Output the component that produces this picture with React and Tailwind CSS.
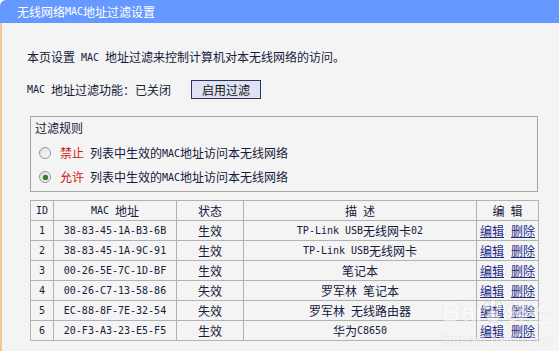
import React from "react";

const M = ({ children }) => (
  <span className="font-['DejaVu_Sans_Mono',monospace] text-[10px]">{children}</span>
);
const Sp = () => <span className="inline-block w-[6px]" />;

const Radio = ({ checked }) => (
  <span className="relative inline-flex h-[12px] w-[12px] items-center justify-center rounded-full border border-[#8a96a6] bg-gradient-to-br from-[#dcdcdc] to-white">
    {checked && <span className="h-[5px] w-[5px] rounded-full bg-[#2f7d32] shadow-[0_0_1px_#1c4d1e]" />}
  </span>
);

const rows = [
  ["1", "38-83-45-1A-B3-6B", "生效", <><M>TP-Link USB</M>无线网卡<M>02</M></>],
  ["2", "38-83-45-1A-9C-91", "生效", <><M>TP-Link USB</M>无线网卡</>],
  ["3", "00-26-5E-7C-1D-BF", "生效", "笔记本"],
  ["4", "00-26-C7-13-58-86", "失效", <>罗军林<Sp />笔记本</>],
  ["5", "EC-88-8F-7E-32-54", "失效", <>罗军林<Sp />无线路由器</>],
  ["6", "20-F3-A3-23-E5-F5", "生效", <>华为<M>C8650</M></>],
];

const Cell = ({ children, className = "" }) => (
  <div className={"flex h-[19px] items-center justify-center overflow-hidden whitespace-nowrap " + className}>
    {children}
  </div>
);

export default function App() {
  return (
    <div className="relative flex h-[351px] w-[559px] flex-col overflow-hidden bg-[#f4f4f4] font-['Noto_Sans_CJK_SC',sans-serif] text-[12px] text-[#15203a]">
      <div className="bg-white">
        <div className="flex h-[23px] items-center rounded-tl-[6px] bg-[#6699ff] pl-[17px] text-white">
          无线网络<M>MAC</M>地址过滤设置
        </div>
      </div>
      <div className="flex-1 border-l-2 border-[#f2c795] bg-[#f4f4f4] pl-[25px] pt-[24px]">
        <div className="flex h-[20px] items-center whitespace-pre">
          本页设置<Sp /><M>MAC</M><Sp />地址过滤来控制计算机对本无线网络的访问。
        </div>
        <div className="mt-[13px] flex h-[19px] items-center">
          <span className="flex items-center"><M>MAC</M><Sp />地址过滤功能：已关闭</span>
          <button className="ml-[20px] h-[19px] w-[70px] border border-[#2c3560] bg-[#dfe2f3] p-0 text-[12px] leading-[17px] text-[#111]">
            启用过滤
          </button>
        </div>
        <div className="ml-[3px] mt-[17px] h-[76px] w-[508px] border border-[#a6a6a6] pt-[1px]">
          <div className="flex h-[20px] items-center pl-[4px]">过滤规则</div>
          <div className="mt-[3px] flex h-[24px] items-center pl-[8px]">
            <Radio />
            <span className="ml-[9px] text-[#cc1616]">禁止</span>
            <span className="ml-[6px] flex items-center">列表中生效的<M>MAC</M>地址访问本无线网络</span>
          </div>
          <div className="flex h-[24px] items-center pl-[8px]">
            <Radio checked />
            <span className="ml-[9px] text-[#cc1616]">允许</span>
            <span className="ml-[6px] flex items-center">列表中生效的<M>MAC</M>地址访问本无线网络</span>
          </div>
        </div>
        <table className="ml-[3px] mt-[8px] w-[508px] table-fixed border-collapse text-center">
          <colgroup>
            <col className="w-[23px]" />
            <col className="w-[123px]" />
            <col className="w-[67px]" />
            <col className="w-[233px]" />
            <col className="w-[62px]" />
          </colgroup>
          <thead>
            <tr>
              <th className="border border-[#b2b2b2] p-0 font-normal"><Cell><M>ID</M></Cell></th>
              <th className="border border-[#b2b2b2] p-0 font-normal"><Cell><M>MAC</M><Sp />地址</Cell></th>
              <th className="border border-[#b2b2b2] p-0 font-normal"><Cell>状态</Cell></th>
              <th className="border border-[#b2b2b2] p-0 font-normal"><Cell>描<Sp />述</Cell></th>
              <th className="border border-[#b2b2b2] p-0 font-normal"><Cell>编<Sp />辑</Cell></th>
            </tr>
          </thead>
          <tbody>
            {rows.map((r) => (
              <tr key={r[0]}>
                <td className="border border-[#b2b2b2] p-0"><Cell><M>{r[0]}</M></Cell></td>
                <td className="border border-[#b2b2b2] p-0"><Cell><M>{r[1]}</M></Cell></td>
                <td className="border border-[#b2b2b2] p-0"><Cell>{r[2]}</Cell></td>
                <td className="border border-[#b2b2b2] p-0"><Cell>{r[3]}</Cell></td>
                <td className="border border-[#b2b2b2] p-0 text-[#1f2b86]">
                  <Cell>
                    <span className="underline">编辑</span>
                    <span className="ml-[7px] underline">删除</span>
                  </Cell>
                </td>
              </tr>
            ))}
          </tbody>
        </table>
      </div>
      <div className="pointer-events-none absolute left-[442px] top-[298px] flex flex-col items-start text-white opacity-50 [text-shadow:0_0_1px_#b8b8b8]">
        <div className="flex items-end font-['Liberation_Sans',sans-serif] text-[26px] font-bold leading-[28px]">
          Bai
          <svg width="22" height="24" viewBox="0 0 22 24" className="mb-[2px]">
            <g fill="#ffffff" stroke="#c4c4c4" strokeWidth="1">
              <ellipse cx="5" cy="6" rx="3" ry="4" />
              <ellipse cx="11" cy="3.5" rx="3" ry="3.5" />
              <ellipse cx="17" cy="6" rx="3" ry="4" />
              <path d="M11 10 C5 10 3 18 6 21 C8 23 14 23 16 21 C19 18 17 10 11 10 Z" />
            </g>
          </svg>
          <span className="ml-[2px] font-['Noto_Sans_CJK_SC',sans-serif] text-[22px]">经验</span>
        </div>
        <div className="mt-[6px] font-['Liberation_Sans',sans-serif] text-[14px] leading-[16px]">jingyan.baidu.com</div>
      </div>
    </div>
  );
}
